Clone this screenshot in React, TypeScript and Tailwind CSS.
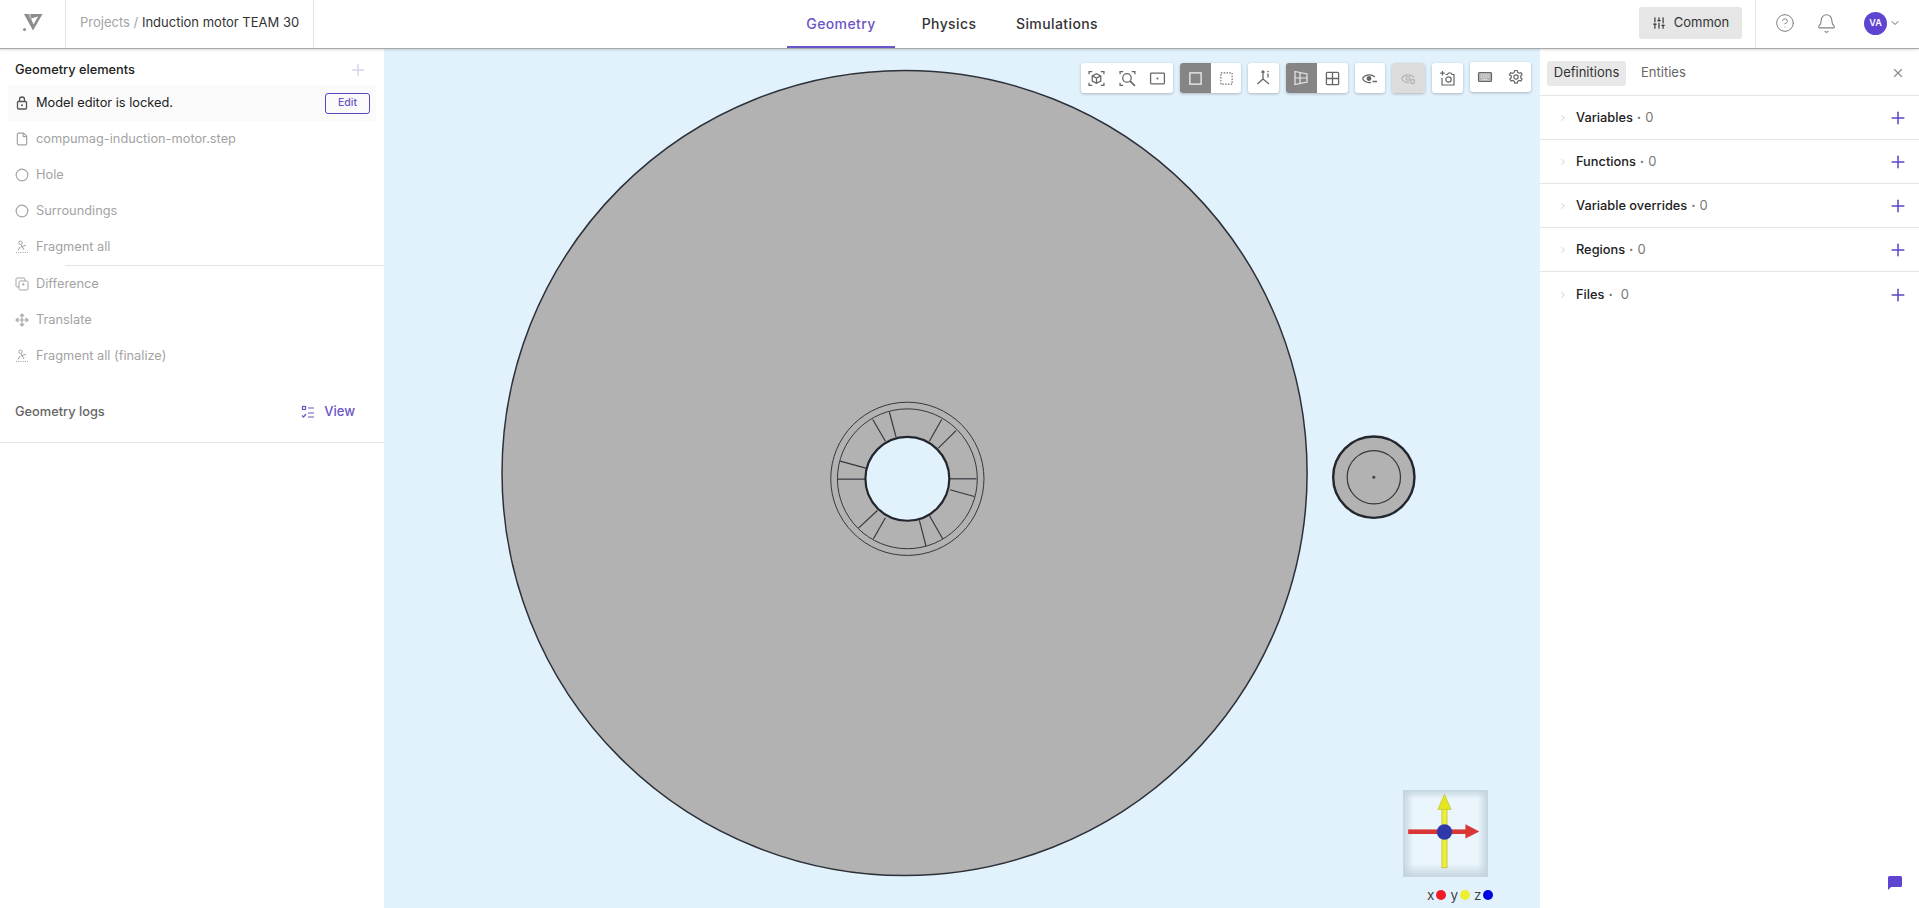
import type { ReactNode } from "react";
import { File, Circle, Move, Plus, X, ChevronRight, ChevronDown, CircleHelp, Bell, SlidersVertical } from "lucide-react";

const FONT = "font-['Inter','Liberation_Sans',sans-serif]";

// spoke ends, measured on a 3x crop around the rotor
const SPOKES = [
  [268, 95, 288, 170],
  [218, 117, 256, 182],
  [425, 117, 388, 182],
  [468, 150, 415, 203],
  [530, 295, 450, 295],
  [523, 348, 450, 328],
  [428, 475, 388, 405],
  [378, 497, 358, 420],
  [220, 475, 256, 412],
  [175, 443, 232, 390],
  [113, 296, 195, 296],
  [120, 242, 197, 263],
];

function Icon({ size = 16, stroke = 1.2, children }: { size?: number; stroke?: number; children: ReactNode }) {
  return (
    <svg width={size} height={size} viewBox="0 0 16 16" fill="none" stroke="currentColor" strokeWidth={stroke}>
      {children}
    </svg>
  );
}

function LockIcon() {
  return (
    <svg width="14" height="14" viewBox="0 0 14 14" fill="none" stroke="#555555" strokeWidth="1.300">
      <rect x="2.500" y="5.500" width="9" height="7.500" rx="1" />
      <path d="M4.500 5.500V3.500a2.500 2.500 0 0 1 5 0v2" />
      <circle cx="7" cy="9.200" r="1" fill="#555555" stroke="none" />
    </svg>
  );
}

function FragmentIcon() {
  return (
    <svg width="14" height="14" viewBox="0 0 14 14" fill="none" stroke="currentColor" strokeWidth="1">
      <circle cx="5.500" cy="2.800" r="1.700" />
      <path d="M6 4.500 9 10M5.800 7 11 5.200M5 7 3 10.500" />
      <path d="M1 12.500h12" strokeDasharray="1 1.200" />
    </svg>
  );
}

function DifferenceIcon() {
  return (
    <svg width="14" height="14" viewBox="0 0 14 14" fill="none" stroke="currentColor" strokeWidth="1">
      <path d="M4 10H2.200A1.200 1.200 0 0 1 1 8.800V2.200A1.200 1.200 0 0 1 2.200 1h6.600A1.200 1.200 0 0 1 10 2.200V4" />
      <rect x="4" y="4" width="9" height="9" rx="1.200" />
      <path d="M7 7.500h3M8.500 6v3" strokeDasharray="1 .6" />
    </svg>
  );
}

function ChecklistIcon() {
  return (
    <svg width="14" height="14" viewBox="0 0 14 14" fill="none" stroke="currentColor" strokeWidth="1.200">
      <rect x="1.500" y="1.500" width="3" height="3" />
      <path d="M7 3h6M7 8h6M7 12h6M1 10.500l1.500 1.500L5 9" />
    </svg>
  );
}

function Logo() {
  return (
    <svg width="22" height="20" viewBox="0 0 22 20">
      <path d="M2 1 L20.500 1 L11 17.500 Z" fill="#8c8c8c" />
      <path d="M9 5.500 L16 3.500 L11.500 11.500 Z" fill="#ffffff" />
      <path d="M6 1 L9 1 L9.500 5.500 L7.500 5.500 Z" fill="#b5b5b5" />
      <circle cx="2.500" cy="16.500" r="1.500" fill="#8c8c8c" />
    </svg>
  );
}

function ToolGroup({ children }: { children: ReactNode }) {
  return (
    <div className="flex h-[30px] overflow-hidden rounded-[3px] bg-white shadow-[0_1px_3px_rgba(0,0,0,0.25)]">
      {children}
    </div>
  );
}

function Tool({ children, active, disabled }: { children: ReactNode; active?: boolean; disabled?: boolean }) {
  let tone = "w-[30.700px] text-[#666666]";
  if (active) tone = "w-[30.700px] bg-[#858585] text-[#e8e8e8]";
  if (disabled) tone = "w-[33px] bg-[#dcdcdc] text-[#b5b5b5]";
  return <div className={`flex h-full items-center justify-center ${tone}`}>{children}</div>;
}

function ElementRow({ icon, label }: { icon: ReactNode; label: string }) {
  return (
    <div className="flex h-9 items-center gap-[7px] pl-[15px] text-[12.800px] text-[#a3a3a3]">
      <span className="flex w-[14px] justify-center">{icon}</span>
      {label}
    </div>
  );
}

function DefinitionRow({ label, last }: { label: string; last?: boolean }) {
  return (
    <div className={`flex h-[44px] items-center pl-[18px] pr-[11px] ${last ? "pt-[2px]" : "border-b border-[#e5e5e5]"}`}>
      <ChevronRight size={10} className="text-[#c4c4c4]" />
      <span className="ml-[8px] text-[12.800px] font-medium text-[#222222]">{label}</span>
      <span className="ml-[4px] text-[13px] text-[#777777]">
        <b>·</b>
        <span className={last ? "ml-[8px]" : "ml-[4px]"}>0</span>
      </span>
      <Plus size={20} strokeWidth={1.800} className="ml-auto text-[#5b45c4]" />
    </div>
  );
}

function Scene() {
  return (
    <svg viewBox="384 48 1156 860" className="absolute inset-0 h-full w-full">
      <circle cx="904.500" cy="472.500" r="403" fill="#b2b2b2" stroke="#2c3038" strokeWidth="1.500" />
      <circle cx="907.300" cy="478.300" r="76.700" fill="none" stroke="#33363c" strokeWidth="1" />
      <circle cx="907.300" cy="478.300" r="70" fill="none" stroke="#33363c" strokeWidth="1" />
      <g transform="translate(800 380) scale(0.3333)" stroke="#33363c" strokeWidth="3.500">
        {SPOKES.map(([x1, y1, x2, y2]) => (
          <line key={`${x1}-${y1}`} x1={x1} y1={y1} x2={x2} y2={y2} />
        ))}
      </g>
      <circle cx="907.300" cy="478.300" r="42" fill="#e1f2fd" stroke="#23262c" strokeWidth="2.200" />
      <circle cx="1374.300" cy="476.700" r="40.700" fill="#b2b2b2" stroke="#23262c" strokeWidth="2.400" />
      <circle cx="1374.300" cy="476.700" r="26.700" fill="none" stroke="#33363c" strokeWidth="1.200" />
      <circle cx="1374.300" cy="476.700" r="1.500" fill="#444444" />
    </svg>
  );
}

function Gizmo() {
  return (
    <svg width="85" height="87" viewBox="0 0 83 85">
      <defs>
        <linearGradient id="gizmo-x" x1="0" x2="1" y1="0" y2="0">
          <stop offset="0" stopColor="#c4d5df" />
          <stop offset="0.12" stopColor="#eaf5fc" />
          <stop offset="0.88" stopColor="#eaf5fc" />
          <stop offset="1" stopColor="#c4d5df" />
        </linearGradient>
        <linearGradient id="gizmo-y" x1="0" x2="0" y1="0" y2="1">
          <stop offset="0" stopColor="#c4d5df" />
          <stop offset="0.1" stopColor="#c4d5df" stopOpacity="0" />
          <stop offset="0.85" stopColor="#c4d5df" stopOpacity="0" />
          <stop offset="1" stopColor="#c4d5df" />
        </linearGradient>
      </defs>
      <rect width="83" height="85" fill="url(#gizmo-x)" />
      <rect width="83" height="85" fill="url(#gizmo-y)" />
      <rect x="38" y="18" width="5" height="58" fill="#eeee33" stroke="#b5b52a" strokeWidth="0.600" />
      <path d="M40.500 4 47 19H34Z" fill="#e6e620" stroke="#b5b52a" strokeWidth="0.500" />
      <rect x="5" y="38.500" width="58" height="4.500" fill="#d93636" />
      <path d="M74.500 40.500 61 33.500V47.500Z" fill="#d93636" />
      <circle cx="40.500" cy="41" r="7.500" fill="#2e38a8" />
    </svg>
  );
}

export default function App() {
  return (
    <div className={`flex h-[908px] w-full flex-col overflow-hidden bg-white ${FONT}`}>
      {/* Header */}
      <header className="relative z-10 flex h-[49px] shrink-0 items-center border-b border-[#a9a9a9] bg-white shadow-[0_1px_2px_rgba(0,0,0,0.15)]">
        <div className="flex h-full w-[66px] items-center justify-center border-r border-[#e3e3e3] pb-[2px]">
          <Logo />
        </div>
        <div className="flex h-full w-[248px] items-center border-r border-[#e3e3e3] pb-[2px] pl-[14px] text-[13px]">
          <span className="text-[#a3a3a3]">Projects /&nbsp;</span>
          <span className="text-[#333333]">Induction motor TEAM 30</span>
        </div>
        <nav className="ml-[473px] flex h-full items-center text-[14px] font-medium tracking-[0.4px] text-[#333333]">
          <div className="flex h-full w-[108px] items-center justify-center border-b-2 border-[#6a55c8] text-[#6a55c8]">
            Geometry
          </div>
          <div className="mb-[2px] ml-[28px] flex w-[52px] justify-center">Physics</div>
          <div className="mb-[2px] ml-[42px] flex w-[80px] justify-center">Simulations</div>
        </nav>
        <div className="ml-auto flex h-full items-center">
          <div className="mb-[2px] flex h-[32px] w-[103px] items-center justify-center gap-2 rounded-[3px] bg-[#e6e6e6] text-[13px] text-[#333333]">
            <SlidersVertical size={14} strokeWidth={2} />
            Common
          </div>
          <div className="ml-[13px] h-full border-l border-[#e3e3e3]" />
          <CircleHelp size={20} strokeWidth={1.200} className="mb-[2px] ml-[19px] text-[#808080]" />
          <Bell size={21} strokeWidth={1.200} className="mb-[2px] ml-[21px] text-[#808080]" />
          <div className="mb-[2px] ml-[27px] flex h-[23px] w-[23px] items-center justify-center rounded-full bg-[#5f43d1] text-[9px] font-semibold text-white">
            VA
          </div>
          <ChevronDown size={12} className="mb-[2px] ml-[2px] mr-[18px] text-[#666666]" />
        </div>
      </header>

      <div className="flex min-h-0 flex-1">
        {/* Left panel */}
        <aside className="w-[384px] shrink-0 bg-white">
          <div className="flex h-[36px] items-center justify-between pl-[15px] pr-[17px] pt-[6px]">
            <span className="text-[12.800px] font-medium text-[#222222]">Geometry elements</span>
            <Plus size={18} className="text-[#d6d0f0]" />
          </div>
          <div className="mx-2 flex h-9 items-center gap-[7px] bg-[#fafafa] pl-[7px] pr-[6px] text-[12.800px] text-[#222222]">
            <LockIcon />
            <span>Model editor is locked.</span>
            <div className="ml-auto flex h-[21px] w-[45px] items-center justify-center rounded-[3px] border border-[#5f43b8] text-[10.500px] font-medium text-[#6a55c8]">
              Edit
            </div>
          </div>
          <ElementRow icon={<File size={14} />} label="compumag-induction-motor.step" />
          <ElementRow icon={<Circle size={14} />} label="Hole" />
          <ElementRow icon={<Circle size={14} />} label="Surroundings" />
          <ElementRow icon={<FragmentIcon />} label="Fragment all" />
          <div className="ml-[65px] border-t border-[#e3e3e3]" />
          <ElementRow icon={<DifferenceIcon />} label="Difference" />
          <ElementRow icon={<Move size={14} />} label="Translate" />
          <ElementRow icon={<FragmentIcon />} label="Fragment all (finalize)" />
          <div className="mt-[12px] flex h-[51px] items-center pl-[15px] pr-[29px]">
            <span className="text-[12.800px] font-medium text-[#666666]">Geometry logs</span>
            <span className="ml-auto flex items-center gap-[9px] text-[13px] font-medium text-[#6a55c8]">
              <ChecklistIcon />
              View
            </span>
          </div>
          <div className="mt-[5px] border-t border-[#e3e3e3]" />
        </aside>

        {/* 3D canvas */}
        <main className="relative flex-1 overflow-hidden bg-[#e1f2fd]">
          <Scene />
          <div className="absolute left-[697px] top-[14px] flex gap-[7px]">
            <ToolGroup>
              <Tool>
                <Icon size={17}>
                  <path d="M1 4V1.500H4M12 1.500h3V4M15 12v2.500h-3M4 14.500H1V12" />
                  <path d="M8 3.500 12 5.500v5L8 12.500 4 10.500v-5ZM4 5.500 8 7.500l4-2M8 7.500v5" />
                </Icon>
              </Tool>
              <Tool>
                <Icon size={17}>
                  <path d="M1 4V1.500H4M12 1.500h3V4M4 14.500H1V12" />
                  <circle cx="7.500" cy="7.500" r="4" />
                  <path d="M10.500 10.500 15 15" strokeWidth="1.500" />
                </Icon>
              </Tool>
              <Tool>
                <Icon size={17}>
                  <rect x="1.500" y="3" width="13" height="10" rx=".8" />
                  <circle cx="8" cy="8" r="1" fill="currentColor" stroke="none" />
                </Icon>
              </Tool>
            </ToolGroup>
            <ToolGroup>
              <Tool active>
                <Icon size={15} stroke={1.500}>
                  <rect x="2" y="2" width="12" height="12" />
                </Icon>
              </Tool>
              <Tool>
                <Icon size={15} stroke={1.200}>
                  <rect x="2" y="2" width="12" height="12" strokeDasharray="1.500 1.500" />
                </Icon>
              </Tool>
            </ToolGroup>
            <ToolGroup>
              <Tool>
                <svg width="18" height="18" viewBox="0 0 18 18" fill="none" stroke="currentColor" strokeWidth="1.300">
                  <path d="M8 2v8M8 10 2.500 15M8 10l6 5M6.500 3.500 8 2l1.500 1.500M13 4.500v4" />
                  <circle cx="13" cy="2.500" r=".8" fill="currentColor" stroke="none" />
                </svg>
              </Tool>
            </ToolGroup>
            <ToolGroup>
              <Tool active>
                <Icon size={16}>
                  <path d="M2 1.500 14 4v8L2 14.500ZM7 2.500v11M2 8h12" />
                </Icon>
              </Tool>
              <Tool>
                <Icon size={15} stroke={1.400}>
                  <rect x="1.500" y="1.500" width="13" height="13" rx="1" />
                  <path d="M8 1.500v13M1.500 8h13" />
                </Icon>
              </Tool>
            </ToolGroup>
            <ToolGroup>
              <Tool>
                <svg width="17" height="17" viewBox="0 0 17 17" fill="none" stroke="currentColor" strokeWidth="1.300">
                  <path d="M1.500 8.500C4 4.500 10 3.500 14 7" />
                  <path d="M1.500 8.500C3.500 12 7 13 10 12.300" />
                  <circle cx="8" cy="8.500" r="1.800" fill="currentColor" />
                  <path d="M11.500 11.500h4.500" />
                </svg>
              </Tool>
            </ToolGroup>
            <ToolGroup>
              <Tool disabled>
                <svg width="17" height="17" viewBox="0 0 17 17" fill="none" stroke="currentColor" strokeWidth="1.300">
                  <path d="M1.500 8.500C4 4.500 10 3.500 14 7" />
                  <path d="M1.500 8.500C3.500 12 7 13 9 12.300" />
                  <circle cx="8" cy="8.500" r="1.800" />
                  <circle cx="12.500" cy="11.500" r="2" />
                </svg>
              </Tool>
            </ToolGroup>
            <ToolGroup>
              <Tool>
                <svg width="17" height="17" viewBox="0 0 17 17" fill="none" stroke="currentColor" strokeWidth="1.200">
                  <path d="M3.500 1v4.500M1.200 3.200h4.600M6.500 4.500h2l1-1.500h2.500l1 1.500h2v10.500H3V8" />
                  <circle cx="9.500" cy="9.500" r="2.700" />
                </svg>
              </Tool>
            </ToolGroup>
            <div className="-mt-px">
              <ToolGroup>
                <Tool>
                  <Icon size={16}>
                    <rect x="1.500" y="3.500" width="13" height="9" rx="1" fill="#b5b5b5" />
                    <path d="M4 6h8M4 8h8M5.500 10.500h5" stroke="#f0f0f0" strokeDasharray="1 .8" />
                  </Icon>
                </Tool>
                <Tool>
                  <Icon size={16}>
                    <path d="M6.800 1.500h2.400l.4 1.800 1.500.9 1.800-.6 1.200 2-1.400 1.300v1.800l1.400 1.300-1.200 2-1.800-.6-1.500.9-.4 1.800H6.800l-.4-1.800-1.500-.9-1.800.6-1.200-2 1.400-1.300V7.100L1.400 5.800l1.200-2 1.800.6 1.500-.9Z" />
                    <circle cx="8" cy="8" r="2.200" />
                  </Icon>
                </Tool>
              </ToolGroup>
            </div>
          </div>

          <div className="absolute left-[1019px] top-[741px]">
            <Gizmo />
          </div>
          <div className="absolute left-[1043px] top-[836px] flex items-center text-[13.500px] text-[#444444]">
            x<span className="ml-[2px] mr-[4px] h-[10px] w-[10px] rounded-full bg-[#ee1c25]" />
            y<span className="ml-[2px] mr-[4px] h-[10px] w-[10px] rounded-full bg-[#eeee33]" />
            z<span className="ml-[2px] h-[10px] w-[10px] rounded-full bg-[#0000e6]" />
          </div>
        </main>

        {/* Right panel */}
        <aside className="relative w-[379px] shrink-0 bg-white">
          <div className="flex h-[47px] items-center border-b border-[#e5e5e5] pl-[7px] pr-[14px] pt-[2px] text-[13px]">
            <div className="flex h-[25px] w-[79px] items-center justify-center rounded-[3px] bg-[#e8e8e8] text-[#333333]">
              Definitions
            </div>
            <div className="ml-[15px] text-[#666666]">Entities</div>
            <X size={14} className="ml-auto text-[#8a8a8a]" />
          </div>
          <DefinitionRow label="Variables" />
          <DefinitionRow label="Functions" />
          <DefinitionRow label="Variable overrides" />
          <DefinitionRow label="Regions" />
          <DefinitionRow label="Files" last />
          <svg width="16" height="16" viewBox="0 0 16 16" className="absolute bottom-[17px] right-[16px]">
            <path d="M1 2.500A1.500 1.500 0 0 1 2.500 1h11A1.500 1.500 0 0 1 15 2.500v8a1.500 1.500 0 0 1-1.500 1.500H4l-3 3Z" fill="#5f43d1" />
          </svg>
        </aside>
      </div>
    </div>
  );
}
